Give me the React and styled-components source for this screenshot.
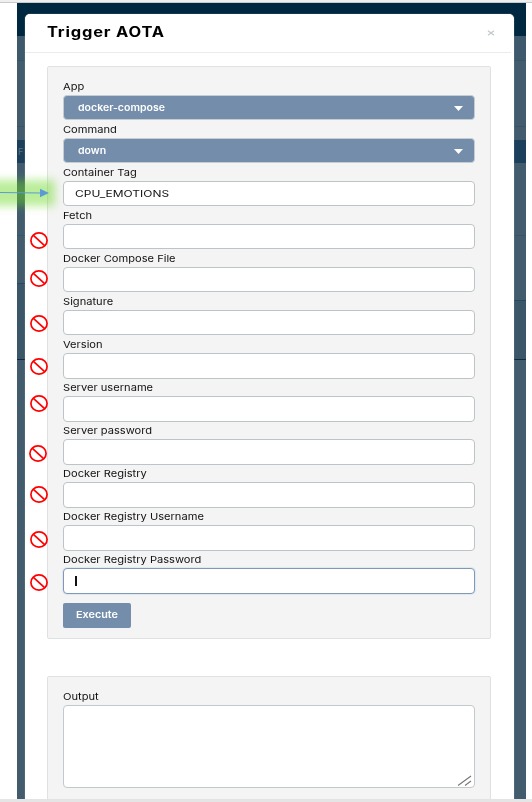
import React from "react";
import styled, { createGlobalStyle } from "styled-components";

const GlobalStyle = createGlobalStyle`
  * { box-sizing: border-box; }
  body { margin: 0; background: #fff; font-family: Inter, "Liberation Sans", sans-serif; color: #111; }
`;

const Screen = styled.div`
  position: relative;
  display: flex;
  flex-direction: column;
  width: 532px;
  height: 802px;
  overflow: hidden;
  background: #fff;
`;

const TopEdge = styled.div`
  flex: none;
  height: 3px;
  background: #f0efef;
  border-bottom: 1px solid #c9c9c9;
`;

const BottomEdge = styled.div`
  flex: none;
  height: 3px;
  background: #e5e5e5;
`;

const Backdrop = styled.div`
  flex: 1;
  min-height: 0;
  display: flex;
  justify-content: space-between;
  margin: 0 6px 0 17px;
  background: #002740;
`;

const Strip = styled.div`
  flex: none;
  width: ${(p) => p.$width}px;
  display: flex;
  flex-direction: column;
`;

const Band = styled.div`
  flex: ${(p) => (p.$height ? "none" : "1")};
  height: ${(p) => p.$height}px;
  background: ${(p) => p.$color};
  color: #5a7081;
  font-size: 9px;
  line-height: 23px;
  overflow: hidden;
  padding-left: 1px;
`;

const Modal = styled.section`
  flex: 1;
  display: flex;
  flex-direction: column;
  margin-top: 11px;
  background: #fff;
  border-radius: 5px 5px 0 0;
  overflow: hidden;
  box-shadow: 0 0 1px 0 #cdd6dc;
  z-index: 1;
`;

const Header = styled.header`
  flex: none;
  height: 39px;
  margin-right: 3px;
  padding: 0 16px 2px 22px;
  display: flex;
  align-items: center;
  justify-content: space-between;
  border-bottom: 1px solid #ebebeb;
`;

const Wide = styled.span`
  display: inline-block;
  white-space: pre;
  transform: scaleX(${(p) => p.$x || 1.17});
  transform-origin: 0 50%;
`;

const Title = styled.h1`
  margin: 0;
  font-size: 14px;
  line-height: 18px;
  font-weight: 700;
  letter-spacing: 0.7px;
  color: #000;
`;

const Close = styled.svg`
  width: 8px;
  height: 6px;
  margin-top: 2px;
  display: block;
`;

const Body = styled.div`
  flex: 1;
  min-height: 0;
  padding: 13px 23px 0 22px;
  display: flex;
  flex-direction: column;
  gap: 37px;
`;

const Panel = styled.div`
  flex: none;
  height: ${(p) => p.$height}px;
  padding: 10.2px 15px 0;
  background: #f4f4f4;
  border: 1px solid #e0e1e1;
  border-radius: 2px;
`;

const Label = styled.label`
  display: block;
  height: 17.75px;
  padding-top: 2.7px;
  font-size: 9.5px;
  line-height: 13px;
`;

const controlText = `
  display: flex;
  align-items: center;
  height: 25.3px;
  border-radius: 4px;
  font-size: 9.5px;
`;

const Select = styled.div`
  ${controlText}
  justify-content: space-between;
  padding: 0 11px 0 13.5px;
  background: #748dab;
  border: 1px solid #c3cdd2;
  color: #fff;
  font-weight: 600;
`;

const Caret = styled.svg`
  width: 9px;
  height: 5px;
  margin-top: 2px;
`;

const Field = styled.div`
  ${controlText}
  padding: 0 11px;
  background: #fff;
  border: 1px solid ${(p) => (p.$focused ? "#7f99b6" : "#bcc4c7")};
  box-shadow: ${(p) => (p.$focused ? "0 0 1px 1px #dfe7ee" : "none")};
`;

const Cursor = styled.span`
  width: 1.5px;
  height: 10px;
  background: #111;
`;

const Button = styled.button`
  display: flex;
  align-items: center;
  width: 68px;
  height: 25px;
  margin-top: 9px;
  padding: 0 0 1px 13px;
  border: 0;
  border-radius: 2px;
  background: #748dab;
  color: #fff;
  font: 600 9.5px Inter, sans-serif;
`;

const Output = styled.div`
  height: 83px;
  display: flex;
  align-items: flex-end;
  justify-content: flex-end;
  padding: 1px 2px;
  background: #fff;
  border: 1px solid #c1c9cc;
  border-radius: 4px;
`;

const Glow = styled.div`
  position: absolute;
  left: -14px;
  top: 180px;
  width: 69px;
  height: 26px;
  background: rgba(105, 215, 30, 0.45);
  filter: blur(4.5px);
  z-index: 2;
`;

const Arrow = styled.svg`
  position: absolute;
  left: 0;
  top: 188px;
  z-index: 3;
`;

const Mark = styled.svg`
  position: absolute;
  left: ${(p) => p.$left}px;
  top: ${(p) => p.$top}px;
  z-index: 3;
`;

const leftBands = [
  [33, "#002740"], [24, "#3d596b"], [1, "#385466"], [65, "#425c6d"], [1, "#365369"],
  [13, "#425c6d"], [23, "#1c405b", "F"], [72, "#425c6d"], [1, "#36546a"],
  [47, "#425c6d"], [1, "#234963"], [75, "#3a5668"], [1, "#0b2b40"], [0, "#425c6d"],
];

const rightBands = [
  [33, "#002740"], [24, "#3d596b"], [1, "#385466"], [65, "#425c6d"], [1, "#365369"],
  [13, "#425c6d"], [23, "#1c405b"], [72, "#425c6d"], [1, "#36546a"],
  [64, "#425c6d"], [1, "#234963"], [58, "#3a5668"], [1, "#0b2b40"], [0, "#425c6d"],
];

const fields = [
  ["Container Tag", "CPU_EMOTIONS"], ["Fetch"], ["Docker Compose File"], ["Signature"],
  ["Version"], ["Server username"], ["Server password"], ["Docker Registry"],
  ["Docker Registry Username"], ["Docker Registry Password"],
];

const marks = [
  [30, 232], [30, 270], [30, 315], [30, 358], [30, 395],
  [29, 445], [30, 486], [30, 531], [30, 574],
];

const SideStrip = ({ bands, width }) => (
  <Strip $width={width}>
    {bands.map(([height, color, text], i) => (
      <Band key={i} $height={height} $color={color}>{text}</Band>
    ))}
  </Strip>
);

const Dropdown = ({ label, value }) => (
  <>
    <Label><Wide>{label}</Wide></Label>
    <Select>
      <Wide $x={1.11}>{value}</Wide>
      <Caret viewBox="0 0 9 5"><path d="M0 0H9L4.5 5Z" fill="#fff" /></Caret>
    </Select>
  </>
);

export default function App() {
  return (
    <Screen>
      <GlobalStyle />
      <TopEdge />
      <Backdrop>
        <SideStrip bands={leftBands} width={8} />
        <Modal>
          <Header>
            <Title><Wide $x={1.175}>Trigger AOTA</Wide></Title>
            <Close viewBox="0 0 8 6">
              <path d="M1 .7 7 5.3M7 .7 1 5.3" stroke="#c3cbd0" strokeWidth="1.4" />
            </Close>
          </Header>
          <Body>
            <Panel $height={573}>
              <Dropdown label="App" value="docker-compose" />
              <Dropdown label="Command" value="down" />
              {fields.map(([label, value], i) => (
                <React.Fragment key={label}>
                  <Label><Wide>{label}</Wide></Label>
                  <Field $focused={i === fields.length - 1}>
                    {value && <Wide $x={1.26}>{value}</Wide>}
                    {i === fields.length - 1 && <Cursor />}
                  </Field>
                </React.Fragment>
              ))}
              <Button><Wide $x={1.14}>Execute</Wide></Button>
            </Panel>
            <Panel $height={140}>
              <Label><Wide>Output</Wide></Label>
              <Output>
                <svg width="15" height="11" viewBox="0 0 15 11">
                  <path d="M1 10.5 14 1M8 10.5 14 6" stroke="#777" strokeWidth="1.1" />
                </svg>
              </Output>
            </Panel>
          </Body>
        </Modal>
        <SideStrip bands={rightBands} width={12} />
      </Backdrop>
      <BottomEdge />
      <Glow />
      <Arrow width="50" height="10" viewBox="0 0 50 10">
        <path d="M0 4.5 41 5" stroke="#5b9bd5" strokeWidth="1.2" />
        <path d="M40 .8 49 5 40 9.3Z" fill="#5b9bd5" />
      </Arrow>
      {marks.map(([left, top]) => (
        <Mark key={top} $left={left} $top={top} width="18" height="17" viewBox="0 0 18 17">
          <ellipse cx="9" cy="8.5" rx="8.1" ry="7.6" fill="none" stroke="#f00" strokeWidth="1.7" />
          <path d="M3.4 3.3 14.6 13.7" stroke="#f00" strokeWidth="1.7" />
        </Mark>
      ))}
    </Screen>
  );
}
